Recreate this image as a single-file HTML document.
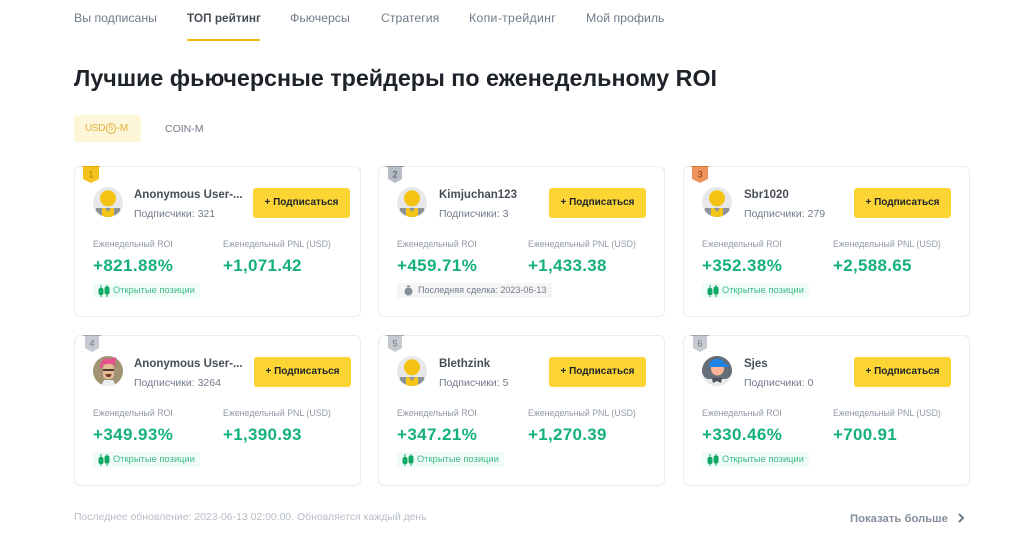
<!DOCTYPE html>
<html lang="ru"><head><meta charset="utf-8"><style>
*{box-sizing:border-box;margin:0;padding:0}
html,body{width:1024px;height:557px;overflow:hidden;background:#fff;font-family:"Liberation Sans","DejaVu Sans",sans-serif}
.t{position:absolute;white-space:nowrap;line-height:16px}
.nav{top:10px;font-size:12.3px;color:#707a8a;font-weight:400}
.card{position:absolute;width:287px;height:151px;border:1px solid #eaecef;border-radius:6px;background:#fff}
.card>*{position:absolute}
.badge{left:7px;top:-1px}
.av{left:18px;top:20px}
.name{left:60px;top:20px;font-size:11.5px;font-weight:700;color:#474d57;line-height:16px;white-space:nowrap}
.sub{left:60px;top:39px;font-size:10.5px;color:#707a8a;line-height:16px;white-space:nowrap}
.c1 .name,.c1 .sub{left:59px}
.btn{left:170px;top:21px;width:97px;height:30px;background:#fcd535;border-radius:3px;font-size:10px;font-weight:700;color:#1e2329;line-height:30px;text-align:center;white-space:nowrap}
.l1,.l2{top:71px;font-size:8.8px;color:#929aa5;line-height:12px;white-space:nowrap}
.l1{left:18px}.l2{left:149px}
.c1 .l2,.c1 .v2{left:148px}
.v1,.v2{top:88px;font-size:17px;font-weight:700;color:#14b27a;line-height:22px;white-space:nowrap;letter-spacing:.4px}
.v1{left:18px}.v2{left:149px;letter-spacing:.3px}
.tag{left:18px;top:116px;height:15px;width:107px;background:#f0fcf6;border-radius:2px;font-size:9.2px;color:#3cb98a;line-height:15px;padding-left:20px;white-space:nowrap;letter-spacing:.1px}
.tag svg{position:absolute;left:5px;top:2px}
.gray{background:#f5f5f5;color:#707a8a;width:155px;font-size:9px;letter-spacing:0;padding-left:21px}
</style></head><body>
<div class="t nav" style="left:74px">Вы подписаны</div>
<div class="t nav" style="left:187px;color:#474d57;font-weight:700;font-size:11.8px">ТОП рейтинг</div>
<div class="t nav" style="left:290px">Фьючерсы</div>
<div class="t nav" style="left:381px">Стратегия</div>
<div class="t nav" style="left:469px;letter-spacing:.3px">Копи-трейдинг</div>
<div class="t nav" style="left:586px">Мой профиль</div>
<div style="position:absolute;left:187px;top:39px;width:73px;height:2px;background:#f0b90b;border-radius:1px"></div>
<div class="t" style="left:74px;top:63px;font-size:23.25px;line-height:30px;font-weight:700;color:#1e2329">Лучшие фьючерсные трейдеры по еженедельному ROI</div>
<div style="position:absolute;left:74px;top:115px;width:67px;height:27px;background:#fef6d8;border-radius:3px"></div>
<div class="t" style="left:85px;top:121px;font-size:10px;letter-spacing:-.3px;color:#e0b33c">USD</div>
<div style="position:absolute;left:105.500px;top:123px;width:10.500px;height:10.500px;border:1px solid #e0b33c;border-radius:50%;font-size:7.500px;line-height:8.500px;text-align:center;color:#e0b33c">S</div>
<div class="t" style="left:116.500px;top:121px;font-size:10px;color:#e0b33c">-M</div>
<div class="t" style="left:165px;top:121px;font-size:10.5px;color:#707a8a">COIN-M</div>

<svg width="0" height="0" style="position:absolute"><defs>
<clipPath id="cc"><circle cx="15" cy="15" r="15"/></clipPath>
<g id="def"><circle cx="15" cy="15" r="15" fill="#e6e8ea"/><g clip-path="url(#cc)"><path d="M2 26L3 21H27L28 26V30H2z" fill="#8c939c"/><path d="M9 21H12L15 25 18 21H21V30H9z" fill="#f5c518"/></g><circle cx="15" cy="11.300" r="8" fill="#f3c212"/></g>
<g id="ic"><path d="M3 0v12M9 0v12" stroke="#0fa968" stroke-width="1"/><rect x="0.500" y="3" width="5" height="7" rx="2" fill="#0fa968"/><rect x="6.500" y="1.500" width="5" height="8" rx="2" fill="#0fa968"/></g>
</defs></svg>

<div class="card c1" style="left:74px;top:166px">
<svg class="badge" width="18" height="18" viewBox="0 0 18 18"><path d="M1 0h16v13l-8 4-8-4z" fill="#f3c21c"/><path d="M0 .5h18" stroke="#e0a800"/><text x="9" y="11.500" font-size="9" text-anchor="middle" fill="#a98708" font-family="Liberation Sans">1</text></svg>
<svg class="av" width="30" height="30"><use href="#def"/></svg>
<div class="name">Anonymous User-...</div><div class="sub">Подписчики: 321</div>
<div class="btn" style="left:178px">+ Подписаться</div>
<div class="l1">Еженедельный ROI</div><div class="l2">Еженедельный PNL (USD)</div>
<div class="v1">+821.88%</div><div class="v2">+1,071.42</div>
<div class="tag"><svg width="12" height="12"><use href="#ic"/></svg>Открытые позиции</div>
</div>

<div class="card" style="left:378px;top:166px">
<svg class="badge" width="18" height="18" viewBox="0 0 18 18"><path d="M2 0h14v13l-7 4-7-4z" fill="#b7bdc6"/><path d="M0 .5h18" stroke="#8f97a3"/><text x="9" y="11.500" font-size="9" text-anchor="middle" fill="#474d57" font-family="Liberation Sans">2</text></svg>
<svg class="av" width="30" height="30"><use href="#def"/></svg>
<div class="name">Kimjuchan123</div><div class="sub">Подписчики: 3</div>
<div class="btn">+ Подписаться</div>
<div class="l1">Еженедельный ROI</div><div class="l2">Еженедельный PNL (USD)</div>
<div class="v1">+459.71%</div><div class="v2">+1,433.38</div>
<div class="tag gray"><svg width="11" height="11" viewBox="0 0 11 11" style="left:6px"><circle cx="5.500" cy="6.500" r="4" fill="#848e9c"/><rect x="4" y="0.500" width="3" height="1.500" fill="#848e9c"/></svg>Последняя сделка: 2023-06-13</div>
</div>

<div class="card" style="left:683px;top:166px">
<svg class="badge" width="18" height="18" viewBox="0 0 18 18"><path d="M1 0h16v13l-8 4-8-4z" fill="#f0935a"/><path d="M0 .5h18" stroke="#d9722e"/><text x="9" y="11.500" font-size="9" text-anchor="middle" fill="#7a3c12" font-family="Liberation Sans">3</text></svg>
<svg class="av" width="30" height="30"><use href="#def"/></svg>
<div class="name">Sbr1020</div><div class="sub">Подписчики: 279</div>
<div class="btn">+ Подписаться</div>
<div class="l1">Еженедельный ROI</div><div class="l2">Еженедельный PNL (USD)</div>
<div class="v1">+352.38%</div><div class="v2">+2,588.65</div>
<div class="tag"><svg width="12" height="12"><use href="#ic"/></svg>Открытые позиции</div>
</div>

<div class="card c1" style="left:74px;top:335px">
<svg class="badge" style="left:8px" width="18" height="18" viewBox="0 0 18 18"><path d="M2 0h14v13l-7 4-7-4z" fill="#c6cbd2"/><path d="M0 .5h18" stroke="#a3abb5"/><text x="9" y="11.500" font-size="9" text-anchor="middle" fill="#707a8a" font-family="Liberation Sans">4</text></svg>
<svg class="av" width="30" height="30" viewBox="0 0 30 30"><circle cx="15" cy="15" r="15" fill="#a09272"/><path d="M8 30l3-6h9l3 6z" fill="#e8eef2"/><rect x="10" y="8" width="11" height="15" rx="4" fill="#e6ba95"/><path d="M7 11C7 5 12 1 18 3l5-2-1 7 1 4-3-4-10 0-1 5z" fill="#e9518f"/><rect x="10" y="13" width="11" height="2" fill="#4a3a2a"/><path d="M12 18h7l-2 3h-3z" fill="#6b3a2a"/></svg>
<div class="name">Anonymous User-...</div><div class="sub">Подписчики: 3264</div>
<div class="btn" style="left:179px">+ Подписаться</div>
<div class="l1">Еженедельный ROI</div><div class="l2">Еженедельный PNL (USD)</div>
<div class="v1">+349.93%</div><div class="v2">+1,390.93</div>
<div class="tag"><svg width="12" height="12"><use href="#ic"/></svg>Открытые позиции</div>
</div>

<div class="card" style="left:378px;top:335px">
<svg class="badge" width="18" height="18" viewBox="0 0 18 18"><path d="M2 0h14v13l-7 4-7-4z" fill="#c6cbd2"/><path d="M0 .5h18" stroke="#a3abb5"/><text x="9" y="11.500" font-size="9" text-anchor="middle" fill="#707a8a" font-family="Liberation Sans">5</text></svg>
<svg class="av" width="30" height="30"><use href="#def"/></svg>
<div class="name">Blethzink</div><div class="sub">Подписчики: 5</div>
<div class="btn">+ Подписаться</div>
<div class="l1">Еженедельный ROI</div><div class="l2">Еженедельный PNL (USD)</div>
<div class="v1">+347.21%</div><div class="v2">+1,270.39</div>
<div class="tag"><svg width="12" height="12"><use href="#ic"/></svg>Открытые позиции</div>
</div>

<div class="card" style="left:683px;top:335px">
<svg class="badge" width="18" height="18" viewBox="0 0 18 18"><path d="M2 0h14v13l-7 4-7-4z" fill="#c6cbd2"/><path d="M0 .5h18" stroke="#a3abb5"/><text x="9" y="11.500" font-size="9" text-anchor="middle" fill="#707a8a" font-family="Liberation Sans">6</text></svg>
<svg class="av" width="30" height="30" viewBox="0 0 30 30"><circle cx="15" cy="15" r="15" fill="#e6e8ea"/><path d="M15 0A15 15 0 0 1 30 15c0 4-3 8-7 8H7c-4 0-7-4-7-8A15 15 0 0 1 15 0z" fill="#656d78"/><path d="M9 11h13v2a6.500 6.500 0 0 1-13 0z" fill="#f9b496"/><path d="M7 11C7 6 10 3 15 3s7 2 8 5l4 1v2z" fill="#1e82e6"/><path d="M10 22h10l-1 5-4-2-4 2z" fill="#4a505a"/></svg>
<div class="name">Sjes</div><div class="sub">Подписчики: 0</div>
<div class="btn">+ Подписаться</div>
<div class="l1">Еженедельный ROI</div><div class="l2">Еженедельный PNL (USD)</div>
<div class="v1">+330.46%</div><div class="v2">+700.91</div>
<div class="tag"><svg width="12" height="12"><use href="#ic"/></svg>Открытые позиции</div>
</div>

<div class="t" style="left:74px;top:510px;font-size:10.450px;color:#b7bdc6">Последнее обновление: 2023-06-13 02:00:00. Обновляется каждый день</div>
<div class="t" style="left:850px;top:511px;font-size:11.300px;font-weight:700;color:#848e9c">Показать больше</div>
<svg style="position:absolute;left:957px;top:513px" width="8" height="10" viewBox="0 0 8 10"><path d="M2 1l4 4-4 4" fill="none" stroke="#707a8a" stroke-width="2"/></svg>
</body></html>
